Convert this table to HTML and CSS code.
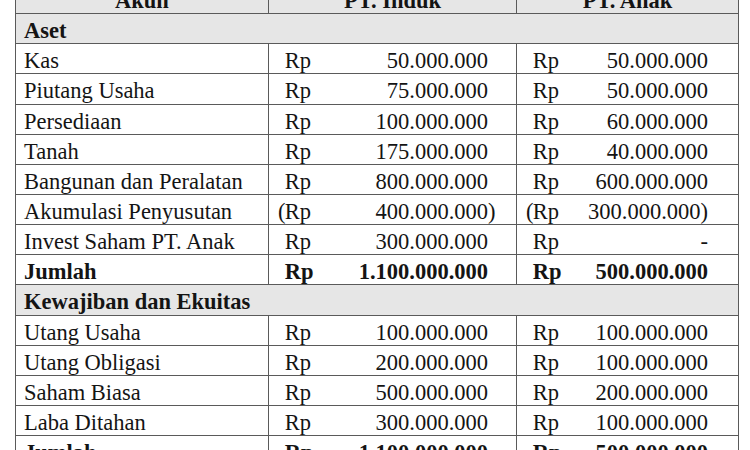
FILE: index.html
```html
<!DOCTYPE html>
<html lang="id">
<head>
<meta charset="utf-8">
<title>Neraca PT. Induk dan PT. Anak</title>
<link rel="stylesheet" href="styles.css">
</head>
<body>
<div class="sheet">
<table class="neraca">
  <colgroup>
    <col class="c-akun">
    <col class="c-induk">
    <col class="c-anak">
  </colgroup>
  <thead>
    <tr class="head">
      <th>Akun</th>
      <th>PT. Induk</th>
      <th>PT. Anak</th>
    </tr>
  </thead>
  <tbody>
    <tr class="section"><td colspan="3">Aset</td></tr>
    <tr>
      <td class="akun">Kas</td>
      <td class="induk"><div class="money"><span class="rp"><span class="par"></span>Rp</span><span class="amt">50.000.000</span></div></td>
      <td class="anak"><div class="money"><span class="rp"><span class="par"></span>Rp</span><span class="amt">50.000.000</span></div></td>
    </tr>
    <tr>
      <td class="akun">Piutang Usaha</td>
      <td class="induk"><div class="money"><span class="rp"><span class="par"></span>Rp</span><span class="amt">75.000.000</span></div></td>
      <td class="anak"><div class="money"><span class="rp"><span class="par"></span>Rp</span><span class="amt">50.000.000</span></div></td>
    </tr>
    <tr>
      <td class="akun">Persediaan</td>
      <td class="induk"><div class="money"><span class="rp"><span class="par"></span>Rp</span><span class="amt">100.000.000</span></div></td>
      <td class="anak"><div class="money"><span class="rp"><span class="par"></span>Rp</span><span class="amt">60.000.000</span></div></td>
    </tr>
    <tr>
      <td class="akun">Tanah</td>
      <td class="induk"><div class="money"><span class="rp"><span class="par"></span>Rp</span><span class="amt">175.000.000</span></div></td>
      <td class="anak"><div class="money"><span class="rp"><span class="par"></span>Rp</span><span class="amt">40.000.000</span></div></td>
    </tr>
    <tr>
      <td class="akun">Bangunan dan Peralatan</td>
      <td class="induk"><div class="money"><span class="rp"><span class="par"></span>Rp</span><span class="amt">800.000.000</span></div></td>
      <td class="anak"><div class="money"><span class="rp"><span class="par"></span>Rp</span><span class="amt">600.000.000</span></div></td>
    </tr>
    <tr>
      <td class="akun">Akumulasi Penyusutan</td>
      <td class="induk"><div class="money"><span class="rp"><span class="par">(</span>Rp</span><span class="amt">400.000.000<span class="close hang">)</span></span></div></td>
      <td class="anak"><div class="money"><span class="rp"><span class="par">(</span>Rp</span><span class="amt">300.000.000<span class="close">)</span></span></div></td>
    </tr>
    <tr>
      <td class="akun">Invest Saham PT. Anak</td>
      <td class="induk"><div class="money"><span class="rp"><span class="par"></span>Rp</span><span class="amt">300.000.000</span></div></td>
      <td class="anak"><div class="money"><span class="rp"><span class="par"></span>Rp</span><span class="amt">-</span></div></td>
    </tr>
    <tr class="total">
      <td class="akun">Jumlah</td>
      <td class="induk"><div class="money"><span class="rp"><span class="par"></span>Rp</span><span class="amt">1.100.000.000</span></div></td>
      <td class="anak"><div class="money"><span class="rp"><span class="par"></span>Rp</span><span class="amt">500.000.000</span></div></td>
    </tr>
    <tr class="section"><td colspan="3">Kewajiban dan Ekuitas</td></tr>
    <tr>
      <td class="akun">Utang Usaha</td>
      <td class="induk"><div class="money"><span class="rp"><span class="par"></span>Rp</span><span class="amt">100.000.000</span></div></td>
      <td class="anak"><div class="money"><span class="rp"><span class="par"></span>Rp</span><span class="amt">100.000.000</span></div></td>
    </tr>
    <tr>
      <td class="akun">Utang Obligasi</td>
      <td class="induk"><div class="money"><span class="rp"><span class="par"></span>Rp</span><span class="amt">200.000.000</span></div></td>
      <td class="anak"><div class="money"><span class="rp"><span class="par"></span>Rp</span><span class="amt">100.000.000</span></div></td>
    </tr>
    <tr>
      <td class="akun">Saham Biasa</td>
      <td class="induk"><div class="money"><span class="rp"><span class="par"></span>Rp</span><span class="amt">500.000.000</span></div></td>
      <td class="anak"><div class="money"><span class="rp"><span class="par"></span>Rp</span><span class="amt">200.000.000</span></div></td>
    </tr>
    <tr>
      <td class="akun">Laba Ditahan</td>
      <td class="induk"><div class="money"><span class="rp"><span class="par"></span>Rp</span><span class="amt">300.000.000</span></div></td>
      <td class="anak"><div class="money"><span class="rp"><span class="par"></span>Rp</span><span class="amt">100.000.000</span></div></td>
    </tr>
    <tr class="total">
      <td class="akun">Jumlah</td>
      <td class="induk"><div class="money"><span class="rp"><span class="par"></span>Rp</span><span class="amt">1.100.000.000</span></div></td>
      <td class="anak"><div class="money"><span class="rp"><span class="par"></span>Rp</span><span class="amt">500.000.000</span></div></td>
    </tr>
  </tbody>
</table>
</div>
</body>
</html>
```

FILE: styles.css
```css
html, body {
  margin: 0;
  padding: 0;
  background: #ffffff;
  overflow: hidden;
}

body {
  font-family: "Liberation Serif", "Times New Roman", serif;
  font-size: 22.5px;
  color: #141414;
}

.sheet {
  padding-left: 15px;
  width: 723px;
}

.neraca {
  margin-top: -17px;
  border-collapse: collapse;
  table-layout: fixed;
  width: 723px;
  border: 1.5px solid #5a5a5a;
}

.c-akun { width: 253px; }
.c-induk { width: 248px; }
.c-anak { width: 222px; }

.neraca th,
.neraca td {
  border: 1.5px solid #5a5a5a;
  height: 30.15px;
  box-sizing: border-box;
  padding: 4px 8px 0 8px;
  line-height: 25px;
  vertical-align: middle;
  white-space: nowrap;
}

.head th {
  background: #e6e6e6;
  font-weight: bold;
  text-align: center;
}

.section td {
  background: #e6e6e6;
  font-weight: bold;
}

.total td {
  font-weight: bold;
}

.neraca td.induk {
  padding-left: 9px;
  padding-right: 28px;
}

.neraca td.anak {
  padding-left: 9px;
  padding-right: 30px;
}

.money {
  display: flex;
  justify-content: space-between;
  align-items: baseline;
}

.par {
  display: inline-block;
  width: 6.7px;
}

.amt {
  position: relative;
}

.close.hang {
  position: absolute;
  left: 100%;
  top: 0;
}
```
